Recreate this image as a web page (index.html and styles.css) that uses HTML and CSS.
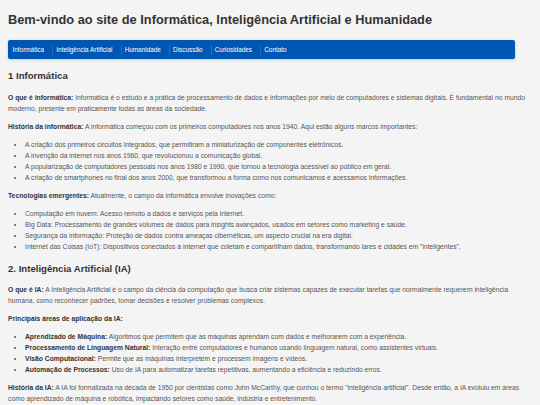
FILE: index.html
```html
<!DOCTYPE html>
<html lang="pt">
<head>
<meta charset="utf-8">
<title>Informática, IA e Humanidade</title>
<link rel="stylesheet" href="styles.css">
</head>
<body>
<div class="page">
  <header class="site-header">
    <h1 class="site-title">Bem-vindo ao site de Informática, Inteligência Artificial e Humanidade</h1>
    <nav class="main-nav">
      <ul class="nav-list">
        <li class="nav-item"><a href="#informatica">Informática</a></li>
        <li class="nav-item"><a href="#ia">Inteligência Artificial</a></li>
        <li class="nav-item"><a href="#humanidade">Humanidade</a></li>
        <li class="nav-item"><a href="#discussao">Discussão</a></li>
        <li class="nav-item"><a href="#curiosidades">Curiosidades</a></li>
        <li class="nav-item"><a href="#contato">Contato</a></li>
      </ul>
    </nav>
  </header>

  <section class="section" id="informatica">
    <h2 class="section-title">1 Informática</h2>
    <p class="text"><strong>O que é informática:</strong> Informática é o estudo e a prática de processamento de dados e informações por meio de computadores e sistemas digitais. É fundamental no mundo moderno, presente em praticamente todas as áreas da sociedade.</p>
    <p class="text"><strong>História da informática:</strong> A informática começou com os primeiros computadores nos anos 1940. Aqui estão alguns marcos importantes:</p>
    <ul class="list">
      <li>A criação dos primeiros circuitos integrados, que permitiram a miniaturização de componentes eletrônicos.</li>
      <li>A invenção da internet nos anos 1960, que revolucionou a comunicação global.</li>
      <li>A popularização de computadores pessoais nos anos 1980 e 1990, que tornou a tecnologia acessível ao público em geral.</li>
      <li>A criação de smartphones no final dos anos 2000, que transformou a forma como nos comunicamos e acessamos informações.</li>
    </ul>
    <p class="text"><strong>Tecnologias emergentes:</strong> Atualmente, o campo da informática envolve inovações como:</p>
    <ul class="list">
      <li>Computação em nuvem: Acesso remoto a dados e serviços pela internet.</li>
      <li>Big Data: Processamento de grandes volumes de dados para insights avançados, usados em setores como marketing e saúde.</li>
      <li>Segurança da informação: Proteção de dados contra ameaças cibernéticas, um aspecto crucial na era digital.</li>
      <li>Internet das Coisas (IoT): Dispositivos conectados à internet que coletam e compartilham dados, transformando lares e cidades em "inteligentes".</li>
    </ul>
  </section>

  <section class="section" id="ia">
    <h2 class="section-title">2. Inteligência Artificial (IA)</h2>
    <p class="text"><strong>O que é IA:</strong> A Inteligência Artificial é o campo da ciência da computação que busca criar sistemas capazes de executar tarefas que normalmente requerem inteligência humana, como reconhecer padrões, tomar decisões e resolver problemas complexos.</p>
    <p class="text"><strong>Principais áreas de aplicação da IA:</strong></p>
    <ul class="list">
      <li><strong>Aprendizado de Máquina:</strong> Algoritmos que permitem que as máquinas aprendam com dados e melhorarem com a experiência.</li>
      <li><strong>Processamento de Linguagem Natural:</strong> Interação entre computadores e humanos usando linguagem natural, como assistentes virtuais.</li>
      <li><strong>Visão Computacional:</strong> Permite que as máquinas interpretem e processem imagens e vídeos.</li>
      <li><strong>Automação de Processos:</strong> Uso de IA para automatizar tarefas repetitivas, aumentando a eficiência e reduzindo erros.</li>
    </ul>
    <p class="text"><strong>História da IA:</strong> A IA foi formalizada na década de 1950 por cientistas como John McCarthy, que cunhou o termo "inteligência artificial". Desde então, a IA evoluiu em áreas como aprendizado de máquina e robótica, impactando setores como saúde, indústria e entretenimento.</p>
  </section>
</div>
</body>
</html>
```

FILE: styles.css
```css
* {
  box-sizing: border-box;
}

html, body {
  margin: 0;
  padding: 0;
  background: #f4f4f4;
}

body {
  font-family: "Liberation Sans", Arial, Helvetica, sans-serif;
  font-size: 6.75px;
  line-height: 11px;
  color: #555;
}

.page {
  padding: 12px 4px 0 8px;
}

.site-title {
  margin: 0;
  font-size: 12.8px;
  line-height: 15px;
  font-weight: bold;
  color: #333;
}

.main-nav {
  margin: 13px 21px 0 0;
  height: 19px;
  background: #0056b3;
  border-radius: 2px;
  box-shadow: 0 1px 3px rgba(0, 86, 179, 0.25);
}

.nav-list {
  list-style: none;
  margin: 0;
  padding: 0 4.5px;
  height: 100%;
  display: flex;
  align-items: center;
}

.nav-item + .nav-item {
  margin-left: 8.2px;
  padding-left: 3px;
  border-left: 1px solid rgba(255, 255, 255, 0.14);
}

.nav-item a {
  color: #fff;
  text-decoration: none;
  font-size: 6.4px;
  line-height: 10px;
  display: block;
}

.section-title {
  margin: 9px 0 7.5px;
  font-size: 9.6px;
  line-height: 16px;
  font-weight: bold;
  color: #333;
}

.text {
  margin: 7px 0;
}

.text strong,
.list strong {
  color: #333;
  font-weight: bold;
}

.list {
  margin: 7px 0;
  padding-left: 17px;
}

.list li {
  line-height: 11px;
}
```
